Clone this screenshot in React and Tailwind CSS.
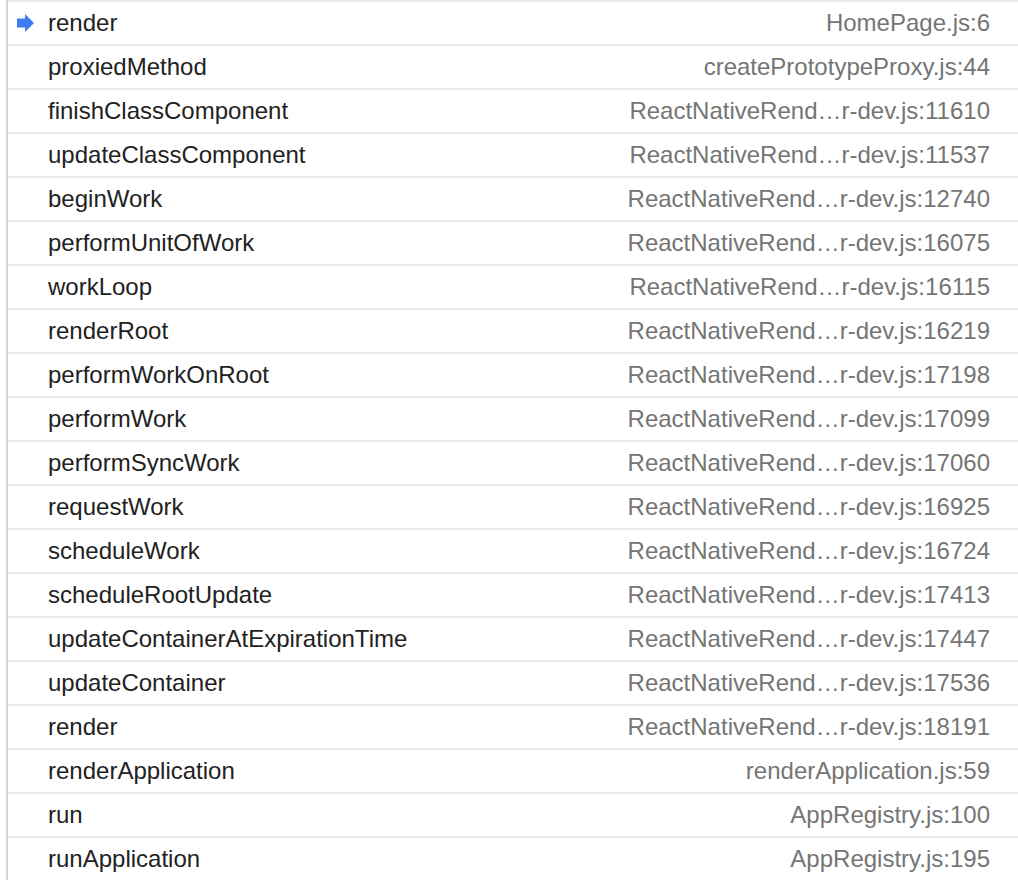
import React from "react";

const rows = [
  ["render", "HomePage.js:6", true],
  ["proxiedMethod", "createPrototypeProxy.js:44"],
  ["finishClassComponent", "ReactNativeRend…r-dev.js:11610"],
  ["updateClassComponent", "ReactNativeRend…r-dev.js:11537"],
  ["beginWork", "ReactNativeRend…r-dev.js:12740"],
  ["performUnitOfWork", "ReactNativeRend…r-dev.js:16075"],
  ["workLoop", "ReactNativeRend…r-dev.js:16115"],
  ["renderRoot", "ReactNativeRend…r-dev.js:16219"],
  ["performWorkOnRoot", "ReactNativeRend…r-dev.js:17198"],
  ["performWork", "ReactNativeRend…r-dev.js:17099"],
  ["performSyncWork", "ReactNativeRend…r-dev.js:17060"],
  ["requestWork", "ReactNativeRend…r-dev.js:16925"],
  ["scheduleWork", "ReactNativeRend…r-dev.js:16724"],
  ["scheduleRootUpdate", "ReactNativeRend…r-dev.js:17413"],
  ["updateContainerAtExpirationTime", "ReactNativeRend…r-dev.js:17447"],
  ["updateContainer", "ReactNativeRend…r-dev.js:17536"],
  ["render", "ReactNativeRend…r-dev.js:18191"],
  ["renderApplication", "renderApplication.js:59"],
  ["run", "AppRegistry.js:100"],
  ["runApplication", "AppRegistry.js:195"],
];

export default function App() {
  return (
    <div
      className="w-[1018px] h-[880px] bg-white overflow-hidden"
      style={{ fontFamily: '"Liberation Sans", Arial, sans-serif' }}
    >
      <div className="ml-[6px] border-l-2 border-[#d6d6d6] h-full">
        {rows.map(([fn, file, active], i) => (
          <div
            key={i}
            className="relative h-[44px] border-t-2 border-[#e8e8e8] flex items-center pl-[40px] pr-[28px] text-[24px] leading-none"
          >
            {active && (
              <svg
                className="absolute left-[9px] top-[12px]"
                width="17"
                height="18"
                viewBox="0 0 17 18"
              >
                <path d="M0 4.5H8V0L17 9L8 18V13.5H0Z" fill="#3d7df2" />
              </svg>
            )}
            <span className="text-[#222222] flex-1">{fn}</span>
            <span className="text-[#757575]">{file}</span>
          </div>
        ))}
      </div>
    </div>
  );
}
